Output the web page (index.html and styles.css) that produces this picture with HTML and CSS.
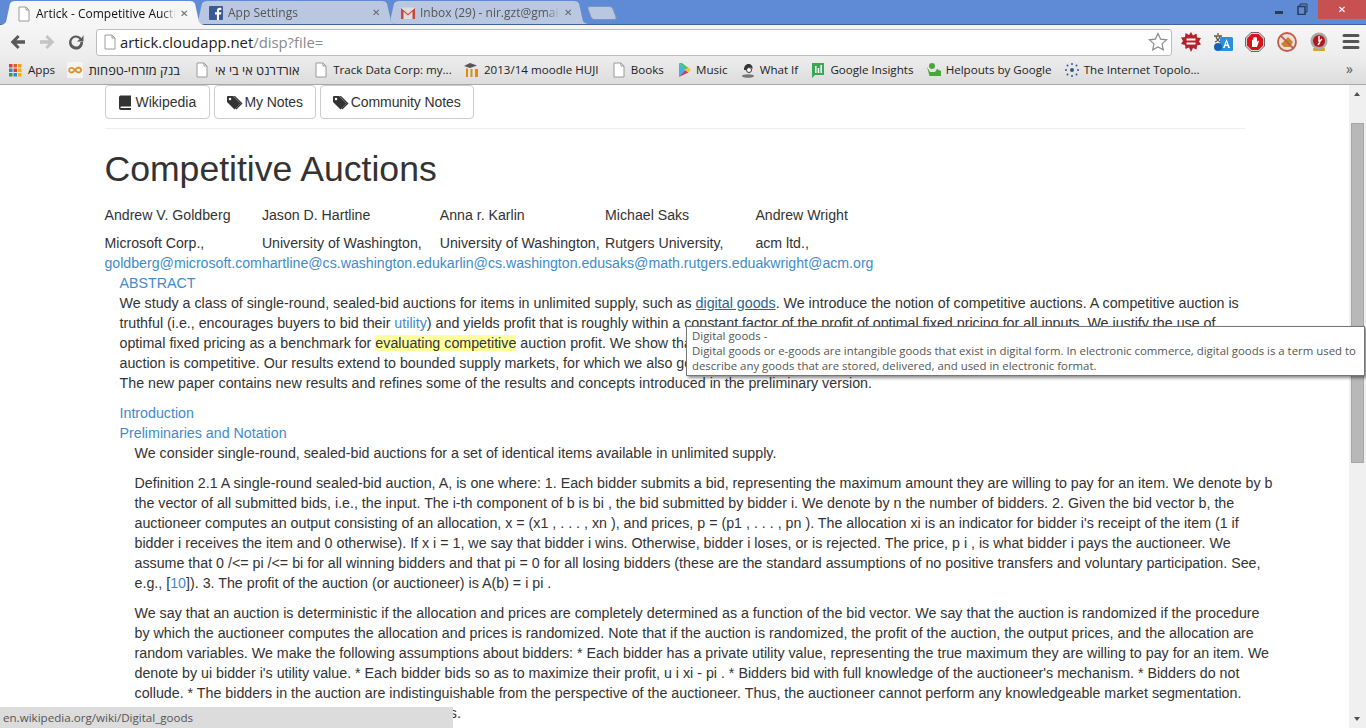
FILE: index.html
```html
<!DOCTYPE html>
<html lang="en">
<head>
<meta charset="utf-8">
<title>Artick - Competitive Auctions</title>
<link rel="stylesheet" href="styles.css">
</head>
<body>
<div class="browser">
  <header class="chrome">
    <div class="tabstrip">
      <div class="tab tab-active">
        <svg class="favicon" viewBox="0 0 16 16"><path d="M3 1h7l3 3v11H3z" fill="#fff" stroke="#9a9a9a"/><path d="M10 1v3h3" fill="none" stroke="#9a9a9a"/></svg>
        <span class="tab-title">Artick - Competitive Auctions</span><span class="tab-x">✕</span>
      </div>
      <div class="tab tab-second">
        <svg class="favicon" viewBox="0 0 16 16"><rect x="1" y="1" width="14" height="14" rx="1" fill="#3b5998"/><path d="M11 15V9.500h2l.3-2.200H11V6c0-.7.2-1.100 1.100-1.100h1.200V2.900c-.6-.1-1.100-.1-1.700-.1C10 2.800 8.900 3.800 8.900 5.700v1.600H7v2.200h1.900V15z" fill="#fff"/></svg>
        <span class="tab-title">App Settings</span><span class="tab-x">✕</span>
      </div>
      <div class="tab tab-third">
        <svg class="favicon" viewBox="0 0 16 16"><rect x="1" y="2.500" width="14" height="11.500" fill="#ddd"/><path d="M1 14V3l7 6 7-6v11h-2.500V6.500L8 10.500 3.500 6.500V14z" fill="#d0453a"/></svg>
        <span class="tab-title">Inbox (29) - nir.gzt@gmail.com</span><span class="tab-x">✕</span>
      </div>
      <div class="tab-new"></div>
      <div class="window-controls">
        <span class="win-min"></span>
        <svg class="win-max" viewBox="0 0 11 12"><path d="M3 3V1h7v8H8" fill="none" stroke="#2d3a52"/><rect x="1" y="3.500" width="7" height="8" fill="none" stroke="#2d3a52" stroke-width="1.500"/></svg>
        <span class="win-close">✕</span>
      </div>
    </div>
    <div class="toolbar">
      <svg class="nav" viewBox="0 0 18 18"><path d="M16 7.300H7.500l3.200-3.200L8.600 2 1.600 9l7 7 2.100-2.100-3.200-3.200H16z" fill="#5a5a5a"/></svg>
      <svg class="nav" viewBox="0 0 18 18"><path d="M2 7.300h8.500L7.300 4.100 9.400 2l7 7-7 7-2.100-2.100 3.200-3.200H2z" fill="#c4c4c4"/></svg>
      <svg class="nav" viewBox="0 0 18 18"><path d="M14.500 5.200A7 7 0 1 0 16 9h-2.500a4.500 4.500 0 1 1-1-2.800L10 8.500h6.500V2z" fill="#5a5a5a"/></svg>
      <div class="omnibox">
        <svg class="favicon" viewBox="0 0 16 16"><path d="M3 1h7l3 3v11H3z" fill="#fff" stroke="#9a9a9a"/><path d="M10 1v3h3" fill="none" stroke="#9a9a9a"/></svg>
        <span class="url">artick.cloudapp.net<span class="url-path">/disp?file=</span></span>
        <svg class="star" viewBox="0 0 20 20"><path d="M10 1.500l2.600 5.600 6 .7-4.500 4.100 1.200 6L10 15l-5.300 2.900 1.200-6L1.400 7.800l6-.7z" fill="#fff" stroke="#8c8c8c" stroke-width="1.200"/></svg>
      </div>
      <div class="extensions">
        <svg class="ext" viewBox="0 0 20 20"><path d="M10 0l2 3.500 3.500-2 .5 4 4 .5-2 3.500 2 3-4 1-.5 4-3.500-1.500L10 20l-2-4.500L4.500 17 4 13l-4-1 2-3-2-3.500 4-.5.500-4 3.500 2z" fill="#b5202c"/><rect x="5.500" y="6.500" width="9" height="2" fill="#fff"/><rect x="5.500" y="10.500" width="9" height="2" fill="#fff"/></svg>
        <svg class="ext" viewBox="0 0 20 20"><rect x="7" y="5" width="13" height="14" rx="1.500" fill="#2b8fdc"/><path d="M13.500 7l3.500 9h-1.800l-.6-2h-2.300l-.6 2H10zm0 3l-.8 2.500h1.600z" fill="#fff"/><path d="M5 1v2M1 4h8M7 4c-.5 3-2.500 5-5 6M3 5c.7 2 2.200 3.700 4 5" stroke="#555" stroke-width="1.300" fill="none"/><circle cx="5" cy="15" r="4" fill="#1a5fb0"/></svg>
        <svg class="ext" viewBox="0 0 20 20"><path d="M6 .500h8L19.500 6v8L14 19.500H6L.5 14V6z" fill="#d8d8d8" stroke="#666"/><path d="M6.500 2h7L18 6.500v7L13.500 18h-7L2 13.500v-7z" fill="#d6141a"/><path d="M7 15V8.500c0-1 1.200-1 1.200 0V6c0-1 1.300-1 1.300 0v-.5c0-1 1.300-1 1.300 0V6c0-1 1.200-1 1.200 0v4l.8-1c.7-.6 1.500 0 1 .8L12 15z" fill="#fff"/></svg>
        <svg class="ext" viewBox="0 0 20 20"><circle cx="10" cy="10" r="9" fill="#e9e2d8" stroke="#c65a4a" stroke-width="1.800"/><path d="M4 12l7-7 5 5-3 5H7z" fill="#c8862c"/><path d="M3.700 3.700l12.600 12.600" stroke="#c65a4a" stroke-width="1.800"/></svg>
        <svg class="ext" viewBox="0 0 20 20"><rect x="4" y="16" width="12" height="3" rx="1" fill="#d9a520"/><circle cx="10" cy="9" r="8.500" fill="#a8a8a8"/><circle cx="10" cy="9" r="6" fill="#b3171d"/><path d="M10 4v6M10 10l3-3M9 13l2-3" stroke="#fff" stroke-width="1.400" fill="none"/></svg>
        <svg class="ext" viewBox="0 0 20 20"><path d="M3 3.500h14M3 9.500h14M3 15.500h14" stroke="#555" stroke-width="3" stroke-linecap="round"/></svg>
      </div>
    </div>
    <nav class="bookmarks">
      <span class="bm">
        <svg class="favicon" viewBox="0 0 16 16"><g><rect x="1" y="2" width="3.500" height="3.500" fill="#d9402f"/><rect x="5.500" y="2" width="3.500" height="3.500" fill="#e25b2c"/><rect x="10" y="2" width="3.500" height="3.500" fill="#f0a020"/><rect x="1" y="6.500" width="3.500" height="3.500" fill="#3c7de0"/><rect x="5.500" y="6.500" width="3.500" height="3.500" fill="#d9402f"/><rect x="10" y="6.500" width="3.500" height="3.500" fill="#f4b400"/><rect x="1" y="11" width="3.500" height="3.500" fill="#2e9e50"/><rect x="5.500" y="11" width="3.500" height="3.500" fill="#3c7de0"/><rect x="10" y="11" width="3.500" height="3.500" fill="#f4b400"/></g></svg>Apps</span>
      <span class="bm">
        <svg class="favicon" viewBox="0 0 16 16"><rect width="16" height="16" fill="#f4f4f0"/><path d="M8 8c-1.500-2-3-2.500-4.500-2S1.500 9 3 10s3.500 0 5-2c1.500-2 3.500-3 5-2s1.500 3 0 4-3.500 0-5-2" fill="none" stroke="#e0902a" stroke-width="1.800"/></svg><span class="bm-he" dir="rtl">בנק מזרחי-טפחות</span></span>
      <span class="bm">
        <svg class="favicon" viewBox="0 0 16 16"><path d="M3 1h7l3 3v11H3z" fill="#fff" stroke="#9a9a9a"/><path d="M10 1v3h3" fill="none" stroke="#9a9a9a"/></svg><span class="bm-he" dir="rtl">אורדרנט אי בי אי</span></span>
      <span class="bm">
        <svg class="favicon" viewBox="0 0 16 16"><path d="M3 1h7l3 3v11H3z" fill="#fff" stroke="#9a9a9a"/><path d="M10 1v3h3" fill="none" stroke="#9a9a9a"/></svg>Track Data Corp: my...</span>
      <span class="bm">
        <svg class="favicon" viewBox="0 0 16 16"><path d="M0 4l6-3 7 2.500-7 2.500z" fill="#555"/><path d="M2 15V6.500h2V15zM6.500 15V7h2v8zM11 15V7h3v8z" fill="#e08a10"/></svg>2013/14 moodle HUJI</span>
      <span class="bm">
        <svg class="favicon" viewBox="0 0 16 16"><path d="M3 1h7l3 3v11H3z" fill="#fff" stroke="#9a9a9a"/><path d="M10 1v3h3" fill="none" stroke="#9a9a9a"/></svg>Books</span>
      <span class="bm">
        <svg class="favicon" viewBox="0 0 16 16"><path d="M3 1h3l6.500 5L9 8z" fill="#4cc26a"/><path d="M3 1v14l6-7z" fill="#3ab5e6"/><path d="M3 15l6-7 3.500 2.500z" fill="#c2416a"/><path d="M12.500 5.500L15 8l-2.500 2.500L9 8z" fill="#f3c42c"/></svg>Music</span>
      <span class="bm">
        <svg class="favicon" viewBox="0 0 16 16"><path d="M4 8c0-4 2-6 4.500-6S13 4 12.500 7c-1-1.500-3-2-4-1.500-.5 2-2 2.500-4.500 2.500z" fill="#333"/><circle cx="9" cy="8" r="2.500" fill="#fff" stroke="#333"/><ellipse cx="8" cy="14" rx="6" ry="1.800" fill="#777"/></svg>What If</span>
      <span class="bm">
        <svg class="favicon" viewBox="0 0 16 16"><path d="M2 1h12v12H5l-3 3z" fill="#3aa757"/><path d="M5 4h1.500v7H5zM7.700 6h1.500v5H7.700zM10.400 3h1.500v8h-1.500z" fill="#fff"/></svg>Google Insights</span>
      <span class="bm">
        <svg class="favicon" viewBox="0 0 16 16"><circle cx="6" cy="4" r="3" fill="#4aa53a"/><path d="M1 5l3 5h5l2-3 4 2v5H3.500z" fill="#4aa53a"/></svg>Helpouts by Google</span>
      <span class="bm">
        <svg class="favicon" viewBox="0 0 16 16"><g fill="#2d5a8c"><circle cx="8" cy="8" r="2"/><circle cx="8" cy="2" r="1"/><circle cx="8" cy="14" r="1"/><circle cx="2" cy="8" r="1"/><circle cx="14" cy="8" r="1"/><circle cx="3.500" cy="3.500" r="1"/><circle cx="12.500" cy="3.500" r="1"/><circle cx="3.500" cy="12.500" r="1"/><circle cx="12.500" cy="12.500" r="1"/></g></svg>The Internet Topolo...</span>
      <span class="bm-more">»</span>
    </nav>
  </header>

  <div class="viewport">
    <main class="page">
      <div class="container">
        <div class="btn-row">
          <a class="btn btn-wiki"><svg class="ico" viewBox="0 0 14 15"><path d="M1 2.500C1 1 2 .5 3 .5h10v11H3.500c-.8 0-1.200.3-1.200.8s.4.8 1.200.8H13V15H3c-1.200 0-2-.8-2-2z" fill="#333"/></svg>Wikipedia</a>
          <a class="btn btn-tag"><svg class="ico ico-tag" viewBox="0 0 17 15"><path d="M0 1v6l8 8 6.500-6.500L6.500.500H.5z" fill="#333"/><circle cx="3.200" cy="3.800" r="1.300" fill="#fff"/><path d="M8.500.5l8 8-6.500 6.500-1-1 5.500-5.500-7.500-8z" fill="#333"/></svg>My Notes</a>
          <a class="btn btn-tag"><svg class="ico ico-tag" viewBox="0 0 17 15"><path d="M0 1v6l8 8 6.500-6.500L6.500.500H.5z" fill="#333"/><circle cx="3.200" cy="3.800" r="1.300" fill="#fff"/><path d="M8.500.5l8 8-6.500 6.500-1-1 5.500-5.500-7.500-8z" fill="#333"/></svg>Community Notes</a>
        </div>
        <hr class="rule">
        <h1 class="title">Competitive Auctions</h1>
        <div class="authors">
          <div class="name">Andrew V. Goldberg</div><div class="name">Jason D. Hartline</div><div class="name">Anna r. Karlin</div><div class="name">Michael Saks</div><div class="name">Andrew Wright</div>
          <div>Microsoft Corp.,</div><div>University of Washington,</div><div>University of Washington,</div><div>Rutgers University,</div><div>acm ltd.,</div>
          <a class="link">goldberg@microsoft.com</a><a class="link">hartline@cs.washington.edu</a><a class="link">karlin@cs.washington.edu</a><a class="link">saks@math.rutgers.edu</a><a class="link">akwright@acm.org</a>
        </div>
        <section class="nest">
          <a class="link block">ABSTRACT</a>
          <p class="para">We study a class of single-round, sealed-bid auctions for items in unlimited supply, such as <a class="wiki">digital goods</a>. We introduce the notion of competitive auctions. A competitive auction is<br>
          truthful (i.e., encourages buyers to bid their <a class="link">utility</a>) and yields profit that is roughly within a constant factor of the profit of optimal fixed pricing for all inputs. We justify the use of<br>
          optimal fixed pricing as a benchmark for <mark class="hl">evaluating competitive</mark> auction profit. We show that several randomized auctions are truthful and competitive under reasonable<br>
          auction is competitive. Our results extend to bounded supply markets, for which we also get competitive auctions.<br>
          The new paper contains new results and refines some of the results and concepts introduced in the preliminary version.</p>
          <a class="link block">Introduction</a>
          <a class="link block">Preliminaries and Notation</a>
          <div class="nest">
            <p class="para">We consider single-round, sealed-bid auctions for a set of identical items available in unlimited supply.</p>
            <p class="para">Definition 2.1 A single-round sealed-bid auction, A, is one where: 1. Each bidder submits a bid, representing the maximum amount they are willing to pay for an item. We denote by b the vector of all submitted bids, i.e., the input. The i-th component of b is bi , the bid submitted by bidder i. We denote by n the number of bidders. 2. Given the bid vector b, the auctioneer computes an output consisting of an allocation, x = (x1 , . . . , xn ), and prices, p = (p1 , . . . , pn ). The allocation xi is an indicator for bidder i's receipt of the item (1 if bidder i receives the item and 0 otherwise). If x i = 1, we say that bidder i wins. Otherwise, bidder i loses, or is rejected. The price, p i , is what bidder i pays the auctioneer. We assume that 0 /&lt;= pi /&lt;= bi for all winning bidders and that pi = 0 for all losing bidders (these are the standard assumptions of no positive transfers and voluntary participation. See, e.g., [<a class="link">10</a>]). 3. The profit of the auction (or auctioneer) is A(b) = i pi .</p>
            <p class="para">We say that an auction is deterministic if the allocation and prices are completely determined as a function of the bid vector. We say that the auction is randomized if the procedure by which the auctioneer computes the allocation and prices is randomized. Note that if the auction is randomized, the profit of the auction, the output prices, and the allocation are random variables. We make the following assumptions about bidders: * Each bidder has a private utility value, representing the true maximum they are willing to pay for an item. We denote by ui bidder i's utility value. * Each bidder bids so as to maximize their profit, u i xi - pi . * Bidders bid with full knowledge of the auctioneer's mechanism. * Bidders do not collude. * The bidders in the auction are indistinguishable from the perspective of the auctioneer. Thus, the auctioneer cannot perform any knowledgeable market segmentation.<br>* Bidders do not know the bids of any other bidders.</p>
          </div>
        </section>
      </div>
      <div class="status">en.wikipedia.org/wiki/Digital_goods</div>
    </main>
    <div class="scrollbar">
      <span class="arrow arrow-up"></span>
      <div class="thumb"></div>
      <span class="arrow arrow-down"></span>
    </div>
    <div class="tooltip">
      <div>Digital goods -</div>
      <div>Digital goods or e-goods are intangible goods that exist in digital form. In electronic commerce, digital goods is a term used to describe any goods that are stored, delivered, and used in electronic format.</div>
    </div>
  </div>
</div>
</body>
</html>
```

FILE: styles.css
```css
* { box-sizing: border-box; }
html, body { margin: 0; height: 100%; overflow: hidden; }
body { font-family: "Liberation Sans", Arial, sans-serif; font-size: 14.25px; line-height: 20px; color: #333; background: #fff; }
.browser { width: 1366px; height: 728px; display: flex; flex-direction: column; overflow: hidden; }

.chrome { flex: none; height: 85px; font-family: "Open Sans", "Noto Sans", sans-serif; }
.tabstrip { height: 25px; background: #5f8ad6; border-bottom: 1px solid #41649f; display: flex; align-items: flex-end; padding-left: 1px; position: relative; }
.tab { width: 203px; height: 23px; margin-right: -11px; display: flex; align-items: center; padding: 1px 14px 0 15px; gap: 4px; font-size: 12px; color: #555; flex: none; position: relative; filter: drop-shadow(0 0 .6px #5f7aa6); }
.tab::before { content: ""; position: absolute; inset: 0; z-index: -1; background: #b9c8e0; clip-path: polygon(0 100%, 3px 96%, 5px 88%, 9px 10%, 11px 2%, 14px 0, calc(100% - 14px) 0, calc(100% - 11px) 2%, calc(100% - 9px) 10%, calc(100% - 5px) 88%, calc(100% - 3px) 96%, 100% 100%); }
.tab-active { height: 24px; margin-bottom: -1px; color: #111; z-index: 3; filter: none; }
.tab-active::before { background: #f6f6f6; }
.tab-second { z-index: 2; }
.tab-third { z-index: 1; }
.favicon { width: 16px; height: 16px; flex: none; }
.tab-title { flex: 1; min-width: 0; overflow: hidden; white-space: nowrap; -webkit-mask-image: linear-gradient(90deg, #000 90%, transparent); mask-image: linear-gradient(90deg, #000 90%, transparent); }
.tab-x { width: 10px; font-size: 10px; color: #666; flex: none; font-family: "DejaVu Sans", sans-serif; }
.tab-new { width: 26px; height: 14px; margin: 0 0 4px 12px; background: #b9c8e0; border: 1px solid #7c95bd; border-radius: 3px; transform: skewX(20deg); flex: none; }
.window-controls { margin-left: auto; align-self: flex-start; display: flex; align-items: flex-start; }
.win-min { width: 8px; height: 3px; background: #2d3a52; margin: 11px 14px 0 0; }
.win-max { width: 11px; height: 12px; margin: 3px 10px 0 0; }
.win-close { width: 48px; height: 19px; background: #c75050; color: #fff; text-align: center; font-size: 10px; line-height: 19px; font-family: "DejaVu Sans", sans-serif; }

.toolbar { height: 34px; background: linear-gradient(#f6f6f6, #ececec); display: flex; align-items: center; padding: 0 6px 0 9px; gap: 11px; }
.nav { width: 18px; height: 18px; flex: none; }
.omnibox { width: 1076px; height: 27px; background: #fff; border: 1px solid #bdbdbd; border-radius: 3px; display: flex; align-items: center; padding: 0 3px 0 5px; gap: 2px; flex: none; margin-right: -2px; }
.url { font-size: 14.850px; color: #222; flex: 1; white-space: nowrap; }
.url-path { color: #8a8a8a; }
.star { width: 20px; height: 20px; flex: none; }
.extensions { display: flex; align-items: center; gap: 12px; }
.ext { width: 20px; height: 20px; flex: none; }

.bookmarks { height: 26px; background: linear-gradient(#ececec, #dcdcdc); border-bottom: 1px solid #a9a9a9; padding: 0 0 4px 8px; display: flex; align-items: center; gap: 12.200px; font-size: 11.600px; color: #222; white-space: nowrap; position: relative; }
.bm { display: flex; align-items: center; gap: 4px; }
.bm-he { font-size: 12.800px; margin: 0 1.500px; }
.bm-more { position: absolute; right: 13px; top: 0; color: #555; font-size: 14px; }

.viewport { flex: 1; min-height: 0; display: flex; position: relative; }
.page { flex: 1; min-width: 0; position: relative; overflow: hidden; }
.container { width: 1170px; margin: 0 auto; padding: 0 15px; }
.btn-row { display: flex; gap: 4px; }
.btn { display: flex; align-items: center; height: 34px; padding: 0 12px; border: 1px solid #ccc; border-radius: 4px; background: #fff; color: #333; font-size: 14px; }
.btn-wiki { min-width: 105px; }
.btn-tag { letter-spacing: -.1px; }
.ico { width: 14px; height: 15px; flex: none; margin-right: 4px; }
.ico-tag { width: 16px; margin-right: 2px; }
.rule { margin: 9px 0 0; border: 0; border-top: 1px solid #eee; }
.title { font-size: 35.600px; font-weight: 500; line-height: 40px; margin: 20px 0 16px; color: #333; }
.authors { display: grid; grid-template-columns: repeat(5, auto); justify-content: start; font-size: 14.150px; }
.name { margin-bottom: 8px; }
.link { color: #428bca; }
.block { display: block; }
.nest { margin-left: 15px; width: 100%; }
.para { margin: 0 0 10px; }
.wiki { color: #2a6496; text-decoration: underline; }
.hl { background: #ffffa0; color: #333; }
.tooltip { position: absolute; left: 686px; top: 241px; width: 679px; height: 50px; background: #fff; border: 1px solid #777; box-shadow: 2px 2px 3px rgba(0,0,0,.45); padding: 1px 5px; font-family: "Open Sans", "Noto Sans", sans-serif; font-size: 11.400px; line-height: 15px; color: #555; }
.status { position: absolute; left: 0; bottom: 0; width: 453px; height: 21px; background: #dcdcdc; font-family: "Open Sans", "Noto Sans", sans-serif; font-size: 11.600px; line-height: 21px; color: #555; padding-left: 3px; }

.scrollbar { width: 17px; flex: none; background: #f0f0f0; position: relative; }
.thumb { position: absolute; left: 2px; right: 2px; top: 38px; height: 340px; background: #b8b8b8; border: 1px solid #a6a6a6; }
.arrow { position: absolute; left: 5px; width: 0; height: 0; border-left: 3.500px solid transparent; border-right: 3.500px solid transparent; }
.arrow-up { top: 7px; border-bottom: 4px solid #505050; }
.arrow-down { bottom: 7px; border-top: 4px solid #505050; }
```
